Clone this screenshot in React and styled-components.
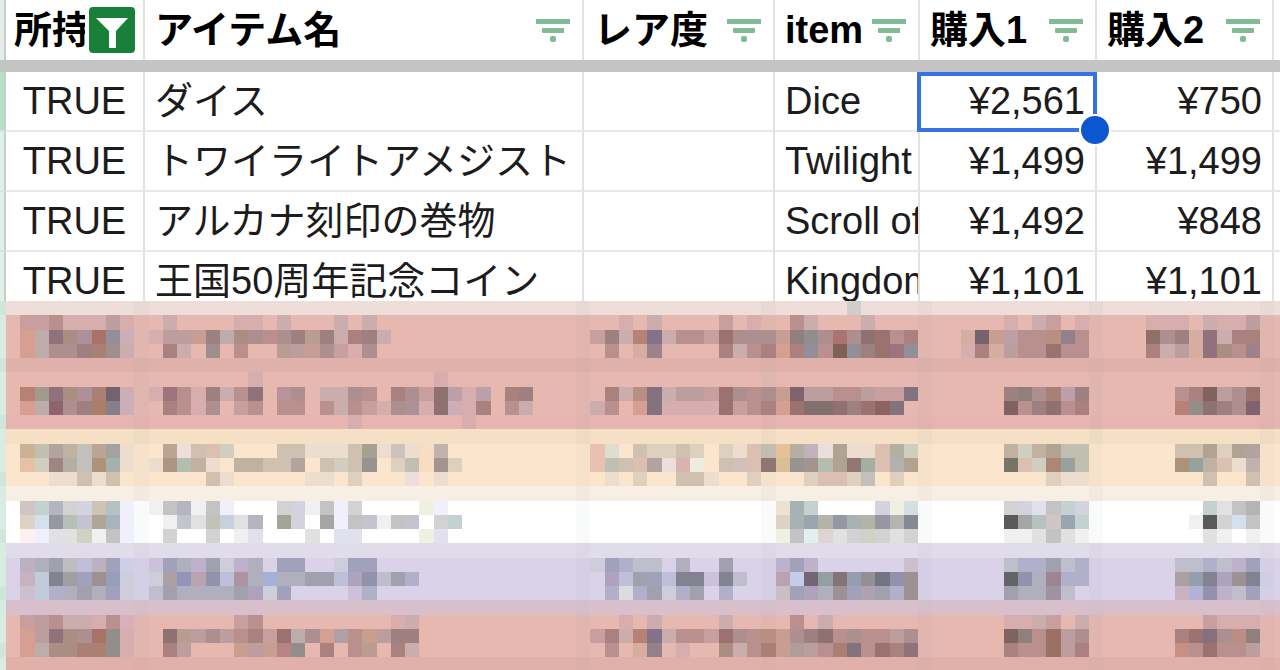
import { createGlobalStyle, styled } from "styled-components";

const GlobalStyle = createGlobalStyle`
	* {
		box-sizing: border-box;
	}
	body {
		margin: 0;
		background: #fff;
		color: #1c1c1c;
		font-family: "Liberation Sans", "Noto Sans CJK JP", sans-serif;
		font-size: 38px;
		overflow: hidden;
	}
`;

const Sheet = styled.main`
	width: 100%;
`;

const Table = styled.table`
	width: 100%;
	table-layout: fixed;
	border-collapse: separate;
	border-spacing: 0;
`;

const Col = styled.col`
	width: ${(p) => p.$width};
`;

const Heading = styled.th`
	height: 60px;
	padding: 0;
	border-right: 2px solid #e2e2e2;
	color: #000;
	font-weight: 700;
`;

const HeadingContent = styled.div`
	display: flex;
	align-items: center;
	justify-content: space-between;
	padding: ${(p) => (p.$active ? "0 8px" : "0 12px 0 10px")};
	line-height: 60px;
	white-space: nowrap;
`;

const HeadingLabel = styled.span`
	min-width: 0;
`;

const FilterButton = styled.button`
	position: relative;
	flex: none;
	display: block;
	padding: 0;
	border: 0;
	border-radius: 4px;
	background: ${(p) => (p.$active ? "#188038" : "transparent")};
	box-shadow: ${(p) => (p.$active ? "0 0 0 4px #fff" : "none")};
	cursor: pointer;
	svg {
		display: block;
	}
`;

const FrozenBar = styled.td`
	height: 12px;
	padding: 0;
	background: #c4c4c4;
`;

const Cell = styled.td`
	position: relative;
	height: 60px;
	padding: 0 10px;
	border-right: 2px solid #e2e2e2;
	border-bottom: 2px solid #e8e8e8;
	line-height: 58px;
	text-align: ${(p) => p.$align || "left"};
	white-space: nowrap;
`;

const CellText = styled.div`
	height: 58px;
	overflow: hidden;
	margin-right: ${(p) => (p.$clip ? "-10px" : "0")};
`;

const EdgeHeading = styled.td`
	padding: 0;
	background: #e6ece8;
	border-right: 2px solid #c8cecb;
`;

const EdgeCell = styled.td`
	padding: 0;
	background: ${(p) => (p.$strong ? "#b7e1c4" : "#e0f1e7")};
	border-right: 2px solid #c8cecb;
	border-bottom: 2px solid #dbe5df;
`;

const NextColumn = styled.td`
	padding: 0;
	border-bottom: ${(p) => (p.$header ? "0" : "2px solid #e8e8e8")};
`;

const Selection = styled.div`
	position: absolute;
	z-index: 1;
	inset: 0 -2px -2px -3px;
	border: 4px solid #3871e0;
	pointer-events: none;
	&::after {
		content: "";
		position: absolute;
		right: -18px;
		bottom: -18px;
		width: 28px;
		height: 28px;
		border: 2px solid #fff;
		border-radius: 50%;
		background: #0b57d0;
	}
`;

const MosaicArea = styled.svg`
	position: relative;
	display: block;
	width: 100%;
	height: 369px;
	margin-top: -11px;
`;

const columns = [
	{ id: "owned", title: "所持", width: "139px", align: "center", active: true },
	{ id: "name", title: "アイテム名", width: "auto" },
	{ id: "rarity", title: "レア度", width: "191px" },
	{ id: "item", title: "item", width: "145px", clip: true },
	{ id: "buy1", title: "購入1", width: "177px", align: "right" },
	{ id: "buy2", title: "購入2", width: "177px", align: "right" },
];

const rows = [
	{ owned: "TRUE", name: "ダイス", item: "Dice", buy1: "¥2,561", buy2: "¥750" },
	{ owned: "TRUE", name: "トワイライトアメジスト", item: "Twilight", buy1: "¥1,499", buy2: "¥1,499" },
	{ owned: "TRUE", name: "アルカナ刻印の巻物", item: "Scroll of", buy1: "¥1,492", buy2: "¥848" },
	{ owned: "TRUE", name: "王国50周年記念コイン", item: "Kingdom", buy1: "¥1,101", buy2: "¥1,101" },
];

// One tile is 14.25 units, the first full column starts at x = 6
const TILE = 14.25;
const ORIGIN = 6;

const bands = [
	"#eddeda", "#e6b8b0", "#e6b8b0", "#e6b8b0", "#e0b1aa", "#e6b8b0", "#e6b8b0",
	"#e6b8b0", "#e6b5b0", "#f5dfc5", "#fce5cd", "#fce5cd", "#fce5cd", "#f8efe4",
	"#ffffff", "#ffffff", "#ffffff", "#e1dce9", "#d9d2e9", "#d9d2e9", "#d9d2e9",
	"#d7c0cc", "#e6b8af", "#e6b8af", "#e6b8af", "#e1b1a9",
];

const separators = [9, 40, 53, 64, 76, 88];

// [row, first column, colours], a dot leaves the band visible
const tiles = [
	[0, 59, "ccc"],
	[1, 1, "c99 c99 b88 daa daa daa b99 daa"],
	[1, 11, "caa . . . . daa daa . caa . . . caa . caa"],
	[1, 43, "daa . caa . . . . c99 . daa . . b88 caa . . . caa"],
	[1, 70, "daa . caa c99 . daa"],
	[1, 80, "daa daa daa . caa daa daa b99"],
	[2, 1, "d98 baa 867 a87 a89 a65 889 cab"],
	[2, 10, "daa b99 b99 c98 977 baa a87 a88 b88 a88 977 b98 977 caa a77 977 caa"],
	[2, 41, "c99 977 caa b76 768 caa b88 b88 c99 966 a88 a88 a88 c98 877 888 a88 a66 a88 866 966 b88 a77"],
	[2, 67, "da9 656 c98 b9a b88 b88 b87 878 b88"],
	[2, 80, "865 a88 977 da9 867 caa a77 a77"],
	[3, 1, "d98 baa a88 a88 977 a76 988 caa"],
	[3, 11, "a77 caa . 988 . b88 . . b98 b99 c98 a88 c99 daa a88"],
	[3, 42, "b88 . da9 978 . . . . a77 caa b88 a77 d98 a77 889 b88 754 889 977 966 967 889"],
	[3, 67, "daa a77 da9 b99 b88 b88 966 b88 b88"],
	[3, 80, "a77 caa b99 da9 867 a87 b88 978"],
	[5, 17, "daa"],
	[5, 30, "daa"],
	[6, 1, "b76 998 867 a87 a89 a76 656 cab"],
	[6, 10, "daa 967 b88 daa 977 caa b88 867 . b89 a88 . caa caa a88 b88 . a77 a88 c99 866 b9a daa b9a . a77 977"],
	[6, 42, "a77 caa b87 767 caa b99 b99 c99 966 a88 b88 a88 c98 756 b99 b99 b88 b88 b99 c99 c99 767"],
	[6, 70, "977 877 a88 a76 b9a 977"],
	[6, 82, "b88 a77 755 b99 a88 966"],
	[7, 1, "d98 baa 856 a88 977 a75 778 cab"],
	[7, 11, "a77 b88 daa a88 . c99 b88 . b88 b88 . b88 caa b88 c99 daa a88 a89 daa 866 cab daa a77 . b88 caa"],
	[7, 41, "caa b88 . d98 767 daa daa daa daa 966 c99 b88 a77 d98 966 766 766 866 977 966 855 767"],
	[7, 70, "755 b88 977 866 b88 a77"],
	[7, 82, "b76 888 866 977 a88 756"],
	[8, 24, "daa . . . . . . . daa"],
	[10, 1, "ca8 bba a99 ba9 bbb b98 999 edc"],
	[10, 11, "b98 edd cba dba ccb . . . cba cba edc edc edc cba 998 edc cbb edc fdb baa"],
	[10, 41, "eba ddc . cba dcb dcb cba dcb . dcb edc dba bba eb8 aa9 bab edd a98 edc edc dba aa9 ccb"],
	[10, 70, "ba9 ccb ba9 a98 bba bba"],
	[10, 82, "cba cba a98 dcb a98 a99"],
	[11, 1, "eb9 ccb 977 aa9 bbb a86 9aa edc"],
	[11, 10, "edc a87 aba ba9 edc . ba9 ba9 cba cba a99 . cba ccb cba 888 . dcb bba fdb 988 dcb"],
	[11, 41, "eba bba cba dba a99 edd daa eed . cba cbb dba 866 db8 888 988 aba a98 866 9a9 dba aaa a98"],
	[11, 70, "665 dba ccb a76 899 bba"],
	[11, 82, "a86 899 ba9 dba edc baa"],
	[12, 3, "edc edc cba edc cba"],
	[12, 14, "cba edc . . . . . edc edc . dcb . . . edd . edc"],
	[12, 42, "edc . dcb . . cba cba edc . . dcb . . . dcb dba dba dcb bbb . dcb"],
	[12, 73, "dcb edc edc"],
	[12, 84, "cba . . cba"],
	[14, 1, "cbb bcc aab ccc ccd cba abb eef"],
	[14, 10, "eee bbb aab eee bbb eef . . . ccc ccd eee bbb eef ccc . . . . eed eef"],
	[14, 54, "edc 9aa bcc . . . . ccd eed cdd"],
	[14, 70, "ccc ccd dde bbb bcc ccd"],
	[14, 84, "bcc ddd bbb aaa"],
	[15, 1, "dcb cde 889 aba bbc a98 9ab eef"],
	[15, 11, "eee bbc ddd bba bcd ddd aab . 998 ccd . 999 eef bbb bbc eee bbb bbc . ccc bcc"],
	[15, 54, "dcb 9aa 89a aa9 889 9aa aa9 889 aaa 778"],
	[15, 70, "444 999 abb cbb 89a bcc"],
	[15, 83, "eee 444 ccc cde bbb"],
	[16, 1, "fee eef ddd ddd ccb eee bbb eef"],
	[16, 11, "ccc . . ccc . eee dde . . . ddd . dde dde . . . . eed dde"],
	[16, 54, "eed bbb dee dcc ddd ccc ccb ccc ddd ccc"],
	[16, 70, "eee eee ddd bbb ddd eee"],
	[16, 84, "ddd eee . eee"],
	[18, 1, "bab aab 99a bbb bbd bab 99b cce"],
	[18, 10, "cbd 99b aab bac 99a ccd bac aab . 99b 99b . . ccd 99b 99b"],
	[18, 41, "ccd 99b aac bbc bbc . aab . . 99a . . . bac 99b bac . . . . . . cbc"],
	[18, 70, "bbc aac aac 99a bbc aac"],
	[18, 82, "bbc bbc aac bbc bac 99b"],
	[19, 1, "cab bcd 778 999 99b 988 89b ccd"],
	[19, 10, "ccd a99 88b b9a 88a bbd a89 aab 9ad aab aab 99a 99a bbd a9b 88a bbc 99a aac"],
	[19, 42, "a9b bbd 99a 99b bbd 778 778 cbd 778 bbc . . b9a bce 656 899 766 89a 888 667 88a 988"],
	[19, 70, "555 88a aab 978 aac aac"],
	[19, 82, "a99 89a 778 a9b 988 778 cce"],
	[20, 1, "cbc bcd aac aab 99a aab 99b ccd"],
	[20, 10, "bbc 99a aab aab aab aab 99a a9b ccd 99b . . . . cbd aac"],
	[20, 42, "aac ddd aac 99a ccd aac 99a . aac . . . cbb 99b a9b aab 988 99b a9a 99a aac 988"],
	[20, 70, "99a aab aab 989 bbc"],
	[20, 82, "cab aad 88a bac bbc 99b"],
	[22, 1, "c99 b99 b88 caa caa daa b88 dab"],
	[22, 16, "c99 b88 . . . . . . . . . daa caa"],
	[22, 43, "daa . caa . . . . caa . . . . b88 . caa"],
	[22, 70, "daa daa caa c99 . caa"],
	[22, 84, "c99 daa daa daa"],
	[23, 1, "d98 b99 867 a87 a88 a65 888 daa"],
	[23, 11, "866 b98 b99 a88 b99 b88 a77 c99 966 baa a88 d98 a9a b88 c98 b99 977 977"],
	[23, 41, "c99 a77 caa b76 768 caa b88 b88 c99 966 a88 b88 b87 c98 a88 977 866 b88 a88 b88 b88 b99 a88"],
	[23, 70, "755 877 b88 965 b99 a88"],
	[23, 82, "a77 966 767 a88 b87 877"],
	[24, 1, "d98 baa a87 a87 a76 a76 888 daa"],
	[24, 11, "a77 b99 . . . c98 b99 c98 b77 888 . a77 . b88 b98 . a77 caa"],
	[24, 42, "b88 . da9 878 . daa . . a87 caa b88 a76 c98 a99 b99 b88 a76 767 b88 966 a77 867"],
	[24, 70, "a77 b88 b88 965 b99 a77"],
	[24, 82, "c87 b88 966 b88 b88 b99"],
];

// Pulls the three channels of a tile towards their mean to keep its tint soft
function soften(color) {
	const channels = color.split("").map((c) => parseInt(c + c, 16));
	const mean = (channels[0] + channels[1] + channels[2]) / 3;
	return `rgb(${channels.map((c) => Math.round(mean + (c - mean) * 0.8)).join(",")})`;
}

function FilterIcon({ active }) {
	if (active) {
		return (
			<svg width="46" height="46" viewBox="0 0 46 46" fill="#fff">
				<path d="M7 11h32L27 24v17h-7V24z" />
			</svg>
		);
	}

	return (
		<svg width="34" height="24" viewBox="0 0 34 24" fill="#81ba95">
			<rect x="0" y="1" width="34" height="5" />
			<rect x="6" y="10" width="22" height="5" rx="1" />
			<rect x="14" y="18" width="6" height="6" rx="2" />
		</svg>
	);
}

function Mosaic() {
	return (
		<MosaicArea
			viewBox="0 0 1280 369"
			preserveAspectRatio="none"
			shapeRendering="crispEdges"
			aria-hidden="true"
		>
			{bands.map((color, i) => (
				<rect key={i} x={ORIGIN} y={i * TILE} width="1274" height={TILE} fill={color} />
			))}

			{bands.map((color, i) => (
				<rect
					key={i}
					x="0"
					y={i * TILE}
					width={ORIGIN}
					height={TILE}
					fill={i % 4 === 0 ? "#d1e6da" : "#d9ece2"}
				/>
			))}

			{separators.map((col) => (
				<rect
					key={col}
					x={ORIGIN + col * TILE}
					y="0"
					width={TILE}
					height="369"
					fill="#8a98a0"
					opacity="0.05"
				/>
			))}

			<g opacity="0.88">
				{tiles.map(([row, start, colors]) =>
					colors.split(" ").map((color, i) =>
						color === "." ? null : (
							<rect
								key={`${row}-${start + i}`}
								x={ORIGIN + (start + i) * TILE}
								y={row * TILE}
								width={TILE}
								height={TILE}
								fill={soften(color)}
							/>
						)
					)
				)}
			</g>
		</MosaicArea>
	);
}

function App() {
	return (
		<Sheet>
			<GlobalStyle />

			<Table>
				<colgroup>
					<Col $width="6px" />
					{columns.map((c) => (
						<Col key={c.id} $width={c.width} />
					))}
					<Col $width="6px" />
				</colgroup>

				<thead>
					<tr>
						<EdgeHeading />
						{columns.map((c) => (
							<Heading key={c.id} scope="col">
								<HeadingContent $active={c.active}>
									<HeadingLabel>{c.title}</HeadingLabel>

									<FilterButton type="button" $active={c.active} aria-label={`${c.title} filter`}>
										<FilterIcon active={c.active} />
									</FilterButton>
								</HeadingContent>
							</Heading>
						))}
						<NextColumn $header />
					</tr>
					<tr>
						<FrozenBar colSpan={columns.length + 2} />
					</tr>
				</thead>

				<tbody>
					{rows.map((row, i) => (
						<tr key={row.name}>
							<EdgeCell $strong={i === 0} />
							{columns.map((c) => (
								<Cell key={c.id} $align={c.align}>
									<CellText $clip={c.clip}>{row[c.id]}</CellText>
									{i === 0 && c.id === "buy1" && <Selection />}
								</Cell>
							))}
							<NextColumn />
						</tr>
					))}
				</tbody>
			</Table>

			<Mosaic />
		</Sheet>
	);
}

export default App;
